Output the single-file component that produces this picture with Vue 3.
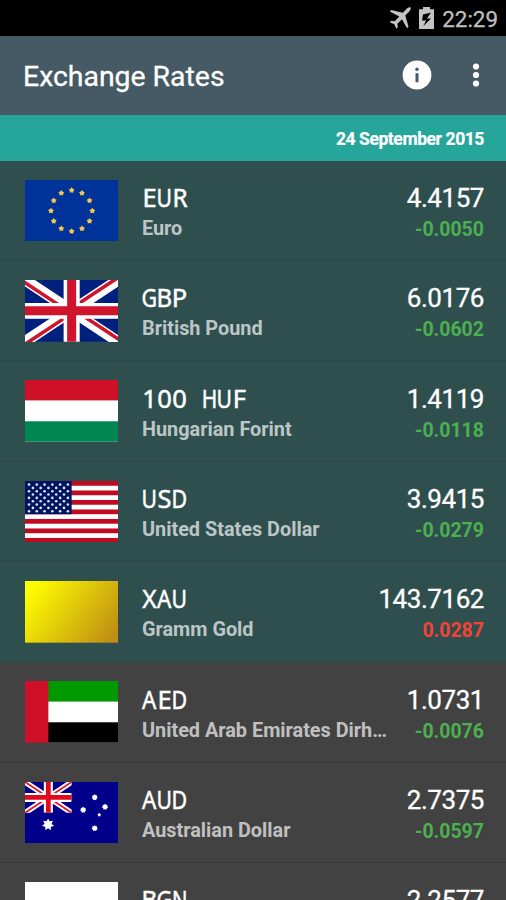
<script setup>
const rates = [
  { code: 'EUR', name: 'Euro', rate: '4.4157', change: '-0.0050', flag: 'eu', pinned: true },
  { code: 'GBP', name: 'British Pound', rate: '6.0176', change: '-0.0602', flag: 'gb', pinned: true },
  { code: '100 HUF', name: 'Hungarian Forint', rate: '1.4119', change: '-0.0118', flag: 'hu', pinned: true },
  { code: 'USD', name: 'United States Dollar', rate: '3.9415', change: '-0.0279', flag: 'us', pinned: true },
  { code: 'XAU', name: 'Gramm Gold', rate: '143.7162', change: '0.0287', flag: 'gold', pinned: true },
  { code: 'AED', name: 'United Arab Emirates Dirham', rate: '1.0731', change: '-0.0076', flag: 'ae' },
  { code: 'AUD', name: 'Australian Dollar', rate: '2.7375', change: '-0.0597', flag: 'au' },
  { code: 'BGN', name: '', rate: '2.2577', change: '', flag: 'bg' },
]

// Horizontal squeeze that fits each letter in a fixed-width cell
const squeeze = { A: 0.88, B: 0.94, D: 0.84, G: 0.84, H: 0.82, N: 0.8, R: 0.95, U: 0.83, X: 0.96 }

function star(cx, cy, r, points = 5, inner = 0.4) {
  const out = []
  for (let i = 0; i < points * 2; i++) {
    const a = (Math.PI * i) / points - Math.PI / 2
    const d = i % 2 ? r * inner : r
    out.push(`${(cx + d * Math.cos(a)).toFixed(2)},${(cy + d * Math.sin(a)).toFixed(2)}`)
  }
  return out.join(' ')
}

const euStars = Array.from({ length: 12 }, (_, i) => {
  const a = (Math.PI * i) / 6
  return star(46.5 + 20.6 * Math.sin(a), 31 - 20.6 * Math.cos(a), 3.1, 5, 0.6)
})

const usStars = []
for (let r = 0; r < 9; r++) {
  for (let c = 0; c < (r % 2 ? 5 : 6); c++) {
    usStars.push([4 + c * 7.75 + (r % 2 ? 3.87 : 0), 3.6 + r * 3.35])
  }
}

const auStars = [
  star(23, 42.8, 6.2, 7, 0.58),
  star(69.5, 15.5, 3.1, 7, 0.75),
  star(79.8, 25, 3.1, 7, 0.75),
  star(58, 28, 3.1, 7, 0.75),
  star(69.5, 46.5, 3.1, 7, 0.75),
  star(74, 33, 2, 5, 0.6),
]
</script>

<template>
  <div class="screen">
    <div class="status">
      <svg class="plane" viewBox="0 0 22 22">
        <path d="M21.6.5C20.600-.2 19 .6 18 1.600L13.800 5.800 2.200 3.100.8 4.600l9.500 4.800-4.500 4.800-3.600-.4L.8 15.200l4.500 2 2.100 4.500 1.400-1.400-.4-3.500 4.600-4.500 5 8.900 1.500-1.500-3.200-11.300L20.400 4.200c1-1 1.800-2.800 1.200-3.700z" />
      </svg>
      <svg class="battery" viewBox="0 0 15 22">
        <path fill-rule="evenodd" d="M4 0h7v2.200H15V22H0V2.200h4zM12 5.500 4 7.500 3 13.500h4L4.500 19 12 11.500H8z" />
      </svg>
      <span class="clock">22:29</span>
    </div>

    <header class="appbar">
      <h1>Exchange Rates</h1>
      <svg class="info" viewBox="0 0 30 30">
        <circle cx="15" cy="15" r="14.400" fill="#fff" />
        <circle cx="15" cy="9.300" r="1.700" fill="#455a64" />
        <rect x="13.500" y="13.200" width="3" height="9" fill="#455a64" />
      </svg>
      <svg class="more" viewBox="0 0 8 26">
        <circle cx="4" cy="4.500" r="3.100" />
        <circle cx="4" cy="13" r="3.100" />
        <circle cx="4" cy="21.500" r="3.100" />
      </svg>
    </header>

    <div class="date">24 September 2015</div>

    <main class="list">
      <div v-for="item in rates" :key="item.code" class="row" :class="{ pinned: item.pinned }">
        <svg class="flag" viewBox="0 0 93 62" preserveAspectRatio="none">
          <g v-if="item.flag === 'eu'">
            <rect width="93" height="62" fill="#039" />
            <polygon v-for="p in euStars" :key="p" :points="p" fill="#f4c84c" />
          </g>
          <g v-else-if="item.flag === 'gb'">
            <rect width="93" height="62" fill="#00207d" />
            <path d="M0 0 93 62M93 0 0 62" stroke="#fff" stroke-width="11" />
            <path d="M-1.200 1.800 45.300 32.800M94.200 60.200 47.700 29.200M91.800-1.800 45.300 29.200M1.200 63.800 47.700 32.800" stroke="#cf142b" stroke-width="3.600" />
            <path d="M46.500 0v62M0 31h93" stroke="#fff" stroke-width="16" />
            <path d="M46.500 0v62M0 31h93" stroke="#cf142b" stroke-width="9" />
          </g>
          <g v-else-if="item.flag === 'hu'">
            <rect width="93" height="62" fill="#fff" />
            <rect width="93" height="20.500" fill="#ce1126" />
            <rect y="41.500" width="93" height="20.500" fill="#008751" />
          </g>
          <g v-else-if="item.flag === 'us'">
            <rect width="93" height="62" fill="#fff" />
            <rect v-for="n in 7" :key="n" :y="(n - 1) * 9.54" width="93" height="4.770" fill="#bf0a22" />
            <rect width="46.500" height="33.400" fill="#00145f" />
            <circle v-for="(s, i) in usStars" :key="'s' + i" :cx="s[0]" :cy="s[1]" r="1.300" fill="#dfe3f2" />
          </g>
          <g v-else-if="item.flag === 'gold'">
            <defs>
              <linearGradient id="gold" gradientUnits="userSpaceOnUse" x1="10" y1="0" x2="88" y2="58">
                <stop offset="0" stop-color="#ff0" />
                <stop offset="1" stop-color="#bf8d14" />
              </linearGradient>
            </defs>
            <rect width="93" height="62" fill="url(#gold)" />
          </g>
          <g v-else-if="item.flag === 'ae'">
            <rect width="93" height="62" fill="#fff" />
            <rect width="93" height="20.700" fill="#090" />
            <rect y="41.500" width="93" height="20.500" fill="#000" />
            <rect width="23.300" height="62" fill="#ce1126" />
          </g>
          <g v-else-if="item.flag === 'au'">
            <rect width="93" height="62" fill="#00008b" />
            <svg width="46.500" height="31" viewBox="0 0 93 62">
              <path d="M0 0 93 62M93 0 0 62" stroke="#fff" stroke-width="11" />
              <path d="M0 0 93 62M93 0 0 62" stroke="#e0162b" stroke-width="3.600" />
              <path d="M46.500 0v62M0 31h93" stroke="#fff" stroke-width="18" />
              <path d="M46.500 0v62M0 31h93" stroke="#e00b1c" stroke-width="9.500" />
            </svg>
            <polygon v-for="p in auStars" :key="p" :points="p" fill="#fff" />
          </g>
          <g v-else>
            <rect width="93" height="62" fill="#fff" />
            <rect y="20.700" width="93" height="20.700" fill="#00966e" />
            <rect y="41.400" width="93" height="20.600" fill="#d62612" />
          </g>
        </svg>
        <div class="label">
          <div class="code">
            <span v-for="(ch, i) in item.code" :key="i" class="cell">
              <span class="glyph" :style="{ transform: `scaleX(${squeeze[ch] || 1})` }">{{ ch }}</span>
            </span>
          </div>
          <div class="name">{{ item.name }}</div>
        </div>
        <div class="figures">
          <div class="rate">{{ item.rate }}</div>
          <div class="change" :class="{ up: item.change[0] !== '-' }">{{ item.change }}</div>
        </div>
      </div>
    </main>
  </div>
</template>

<style>
body {
  margin: 0;
  background: #424242;
}
</style>

<style scoped>
.screen {
  width: 506px;
  height: 900px;
  overflow: hidden;
  display: flex;
  flex-direction: column;
  font-family: Roboto, "Liberation Sans", sans-serif;
  color: #fff;
  background: #424242;
}
.status {
  flex: none;
  height: 36px;
  box-sizing: border-box;
  padding: 0 8px 0 0;
  display: flex;
  align-items: center;
  justify-content: flex-end;
  background: #000;
  color: #bfbfbf;
}
.status svg {
  fill: #c4c4c4;
}
.plane {
  width: 22px;
  height: 22px;
  margin-right: 8px;
}
.battery {
  width: 15px;
  height: 22px;
  margin-right: 8px;
}
.clock {
  font-size: 22.400px;
  line-height: 36px;
  padding-top: 1px;
  -webkit-text-stroke: 0.300px;
}
.appbar {
  flex: none;
  height: 78.500px;
  box-sizing: border-box;
  padding: 0 26px 0 23px;
  display: flex;
  align-items: center;
  background: #455a64;
}
h1 {
  flex: 1;
  margin: 0;
  padding-top: 3px;
  font-size: 28.400px;
  font-weight: 400;
  line-height: 34px;
  -webkit-text-stroke: 0.300px;
}
.info {
  width: 30px;
  height: 30px;
  margin-right: 40px;
}
.more {
  width: 8px;
  height: 26px;
  fill: #fff;
}
.date {
  flex: none;
  height: 46.500px;
  box-sizing: border-box;
  padding: 2px 22px 0 0;
  text-align: right;
  font-size: 17.500px;
  font-weight: 700;
  letter-spacing: -0.420px;
  line-height: 45px;
  -webkit-text-stroke: 0.200px;
  background: #26a69a;
}
.row {
  height: 100.350px;
  box-sizing: border-box;
  padding: 0 22px 0 24.700px;
  display: flex;
  align-items: flex-start;
  border-bottom: 1px solid #363838;
  background: #424242;
}
.row.pinned {
  background: #2f4f4f;
  border-bottom-color: #324545;
}
.flag {
  flex: none;
  width: 93.300px;
  height: 61.700px;
  margin-top: 18.700px;
}
.label {
  flex: 1;
  min-width: 0;
  margin: 19px 14px 0 24px;
}
.code {
  display: flex;
  height: 35px;
  font: 25.500px/34px "Noto Sans", sans-serif;
  -webkit-text-stroke: 0.500px;
}
.cell {
  width: 15px;
  display: flex;
  justify-content: center;
}
.glyph {
  flex: none;
}
.name {
  font-size: 19.850px;
  font-weight: 700;
  line-height: 28px;
  white-space: nowrap;
  overflow: hidden;
  text-overflow: ellipsis;
  color: #c0c0c0;
}
.pinned .name {
  color: #bcc6c6;
}
.figures {
  flex: none;
  margin-top: 20px;
  text-align: right;
}
.rate {
  height: 35px;
  font-size: 26px;
  line-height: 34px;
  letter-spacing: -0.450px;
  -webkit-text-stroke: 0.300px;
}
.change {
  font-size: 19.500px;
  font-weight: 700;
  line-height: 28px;
  color: #4caf50;
}
.change.up {
  color: #f44336;
}
</style>
